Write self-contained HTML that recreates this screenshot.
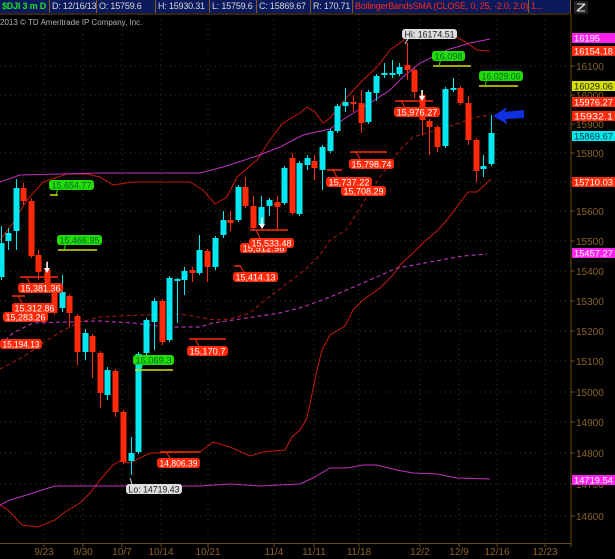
<!DOCTYPE html>
<html><head><meta charset="utf-8"><style>
html,body{margin:0;padding:0;background:#000;width:615px;height:559px;overflow:hidden;font-family:"Liberation Sans",sans-serif}
#bar{position:absolute;left:0;top:0;width:571px;height:13px;background:#0b1a5c;font-size:9px;line-height:13px;color:#d8d8d8;white-space:nowrap;letter-spacing:-0.2px}
#bar span{position:absolute;top:0;height:13px;border-right:1px solid #8a5a20;padding-left:2px;box-sizing:border-box;overflow:hidden}
svg{position:absolute;left:0;top:0}
</style></head><body>
<svg id="s" width="615" height="559" xmlns="http://www.w3.org/2000/svg" font-family="Liberation Sans, sans-serif"></svg>
<div id="bar">
<span style="left:0;width:50px;color:#22e022;font-weight:bold">$DJI 3 m D</span>
<span style="left:50px;width:47px">D: 12/16/13</span>
<span style="left:97px;width:59px">O: 15759.6</span>
<span style="left:156px;width:54px">H: 15930.31</span>
<span style="left:210px;width:47px">L: 15759.6</span>
<span style="left:257px;width:54px">C: 15869.67</span>
<span style="left:311px;width:42px">R: 170.71</span>
<span style="left:353px;width:176px;color:#ff2a1a">BollingerBandsSMA (CLOSE, 0, 25, -2.0, 2.0)</span>
<span style="left:529px;width:42px;color:#ff2a1a">1...</span>
</div>
<script>
var s=document.getElementById('s'),h='';
function L(x1,y1,x2,y2,c,w,d){h+='<line x1="'+x1+'" y1="'+y1+'" x2="'+x2+'" y2="'+y2+'" stroke="'+c+'" stroke-width="'+(w||1)+'"'+(d?' stroke-dasharray="'+d+'"':'')+'/>';}
function P(pts,c,w,d){h+='<polyline fill="none" points="'+pts+'" stroke="'+c+'" stroke-width="'+(w||1)+'"'+(d?' stroke-dasharray="'+d+'"':'')+'/>';}
function T(x,y,t,c,sz,a,tl){h+='<text x="'+x+'" y="'+y+'" fill="'+c+'" font-size="'+(sz||10)+'"'+(a?' text-anchor="'+a+'"':'')+(tl?' textLength="'+tl+'" lengthAdjust="spacingAndGlyphs"':'')+'>'+t+'</text>';}
function R(x,y,w,hh,c,r){h+='<rect x="'+x+'" y="'+y+'" width="'+w+'" height="'+hh+'" fill="'+c+'"'+(r?' rx="'+r+'"':'')+'/>';}
var dx=[44,83,122,161,208,274,314,359,420,459,497,545],dl=['9/23','9/30','10/7','10/14','10/21','11/4','11/11','11/18','12/2','12/9','12/16','12/23'];
var gy=[[66,'16100'],[95,'16000'],[124,'15900'],[153,'15800'],[182,'15700'],[211,'15600'],[241,'15500'],[271,'15400'],[301,'15300'],[331,'15200'],[361,'15100'],[392,'15000'],[422,'14900'],[453,'14800'],[484,'14700'],[516,'14600']];
dx.forEach(function(x,i){L(x,14,x,543,'#4a3410',1,'1 4');L(x,543,x,547,'#6a4a18');T(x,555,dl[i],'#8a6428',10,'middle');});
gy.forEach(function(g){L(0,g[0],571,g[0],'#4a3410',1,'1 4');L(571,g[0],575,g[0],'#6a4a18');T(576,g[0]+4,g[1],'#8a6428',10);});
L(571,14,571,547,'#6a4a18');L(0,543.5,571,543.5,'#6a4a18');L(0,14,571,14,'#6a4a18');
T(0,25,'2013 © TD Ameritrade IP Company, Inc.','#b0b0b0',8);
P('0,240 13,223 27,200 43,182 67,174 87,174 100,177 113,185 133,182 167,182 190,182 203,190 215,204 227,197 237,177 257,160 270,140 283,123 300,113 307,107 315,112 323,123 330,118 347,97 363,80 377,67 390,50 407,38 420,33 440,32 457,37 470,45 477,50 490,51','#c81a0a');
P('0,505 8,510 22,525 38,527 55,520 65,512 80,503 90,493 100,480 113,465 120,461 130,463 150,453 190,452 200,452 213,442 230,447 250,456 263,452 285,450 292,437 300,430 307,418 317,370 322,350 330,335 345,326 353,310 363,300 380,288 393,275 400,265 413,253 423,243 438,230 447,220 468,192 477,192 491,179','#c81a0a');
P('0,182 20,175 100,173 200,173 223,167 257,156 280,147 303,135 330,129 347,117 370,103 390,90 403,77 420,63 447,50 470,43 490,39','#c030c0');
P('0,505 10,500 30,494 42,490 55,486 120,486 150,486 200,486 230,484 260,486 300,484 313,478 330,468 347,468 363,465 377,465 397,470 413,473 437,474 457,478 490,479','#c030c0');
P('0,369 23,357 43,343 60,332 80,322 100,317 140,315 180,314 215,320 230,319 250,313 265,300 285,285 305,270 320,255 330,240 346,230 365,200 380,177 400,150 413,137 447,127 477,117 490,115','#b01a0a',1,'4 3');
P('0,345 13,333 33,323 67,322 100,321 133,323 167,327 200,327 213,323 247,318 280,313 303,307 330,297 363,283 397,268 430,262 463,256 487,254','#b030b0',1.2,'4 3');
var C=[[1,243,277,226,280,'c'],[8,233,241,228,250,'c'],[16,188,231,179,250,'c'],[23,188,201,183,205,'r'],[31,201,256,198,258,'r'],[38,255,272,250,280,'r'],[47,270,287,261,290,'r'],[54,288,313,283,315,'r'],[62,292,308,275,312,'c'],[69,296,313,294,327,'r'],[77,316,352,314,365,'r'],[85,333,352,329,360,'c'],[92,336,352,334,378,'r'],[100,353,393,351,408,'r'],[107,370,395,367,400,'c'],[115,371,412,369,417,'r'],[123,412,462,410,464,'r'],[131,453,461,437,475,'c'],[138,354,452,352,454,'c'],[146,320,353,318,355,'c'],[154,301,322,298,350,'c'],[162,301,342,299,345,'r'],[169,278,340,276,342,'c'],[177,279,280,278,323,'c'],[184,271,280,267,295,'c'],[192,270,273,267,282,'r'],[199,250,273,235,275,'c'],[207,251,267,249,282,'r'],[215,238,267,236,270,'c'],[223,220,235,211,238,'c'],[230,220,223,211,231,'r'],[238,187,220,185,222,'c'],[245,187,206,177,208,'r'],[253,206,228,196,230,'r'],[261,207,225,196,227,'c'],[269,200,206,198,216,'c'],[277,202,207,196,230,'r'],[284,168,203,166,205,'c'],[292,158,213,153,215,'r'],[299,163,214,161,216,'c'],[307,158,165,155,170,'c'],[314,161,168,155,180,'r'],[322,147,170,145,190,'c'],[330,131,151,129,153,'c'],[337,106,131,104,133,'c'],[345,102,106,88,112,'c'],[353,102,104,95,112,'r'],[361,103,123,90,133,'r'],[368,92,122,90,124,'c'],[376,76,93,74,101,'c'],[384,73,75,63,78,'c'],[392,73,75,60,78,'c'],[399,67,74,63,76,'c'],[407,65,70,43,80,'r'],[414,70,92,68,98,'r'],[422,95,120,90,135,'r'],[429,121,127,119,155,'r'],[437,127,147,125,152,'r'],[445,89,146,87,148,'c'],[453,88,90,78,92,'c'],[460,88,103,86,105,'r'],[468,103,140,96,145,'r'],[476,140,171,138,182,'r'],[483,166,169,155,177,'c'],[491,133,164,115,166,'c']];
C.forEach(function(c){var col=c[5]=='c'?'#00e8f0':'#ff2a0a';L(c[0]+0.5,c[3],c[0]+0.5,c[4],col);R(c[0]-2.5,c[1],6,Math.max(2,c[2]-c[1]),col);});
function B(x,y,w,t,bg,fg,lx1,ly,lx2,lc){if(lx1!=null){L(lx1,ly,lx2,ly,lc,1.5);L(lx1+6,ly,lx1+10,y,bg);}R(x,y,w,10,bg,3);T(x+w/2,y+8.5,t,fg,9.5,'middle',w-5);}
var RD='#ff2a0a',GR='#22dd00',YL='#d8e000';
B(49,180,45,'15,654.77',GR,'#063',50,195,58,YL);
B(57,235,45,'15,466.95',GR,'#063',58,250,97,YL);
B(12,303,45,'15,312.86',RD,'#fff',12,296,25,RD);
B(3,312,45,'15,283.26',RD,'#fff');
B(18,283,45,'15,381.36',RD,'#fff',20,277,58,RD);
B(0,339,42,'15,194.13',RD,'#fff');
B(133,355,41,'15,069.3',GR,'#063',135,370,173,YL);
B(157,458,43,'14,806.39',RD,'#fff',160,452,200,RD);
B(187,346,41,'15,170.7',RD,'#fff',189,339,226,RD);
B(233,272,45,'15,414.13',RD,'#fff',234,266,241,RD);
B(240,243,47,'15,512.98',RD,'#fff');
B(249,238,45,'15,533.48',RD,'#fff',250,230,288,RD);
B(341,186,45,'15,708.29',RD,'#fff');
B(326,177,46,'15,737.22',RD,'#fff',327,170,342,RD);
B(349,159,45,'15,798.74',RD,'#fff',350,152,387,RD);
B(394,107,46,'15,976.27',RD,'#fff',395,101,433,RD);
B(432,51,33,'16,098',GR,'#063',433,66,471,YL);
B(479,71,44,'16,029.06',GR,'#063',479,86,518,YL);
B(402,29,55,'Hi: 16174.51','#ddd','#222');L(408,39,405,44,'#ddd');
B(126,484,56,'Lo: 14719.43','#ddd','#222');L(132,484,130,478,'#ddd');
function DA(x,y){L(x,y-8,x,y,'#fff',1.5);h+='<polygon points="'+(x-3)+','+(y-2)+' '+(x+3)+','+(y-2)+' '+x+','+(y+3)+'" fill="#fff"/>';}
DA(47,270);DA(262,226);DA(422,98);
h+='<path d="M524,110 L505,112 L507,107 L493,116 L507,124 L506,119 L524,118 Z" fill="#1030e0"/>';
function AB(y,t,bg,fg){R(572,y,43,10,bg);T(574,y+8.5,t,fg||'#fff',9.5,null,t.length>5?39:26);}
AB(33,'16195','#ff22ee');AB(46,'16154.18',RD);AB(81,'16029.06',YL,'#222');AB(97,'15976.27',RD);AB(111,'15932.1',RD);AB(131,'15869.67','#00e8f0','#033');AB(177,'15710.03',RD);AB(248,'15457.27','#ff22ee');AB(475,'14719.54','#ff22ee');
R(574,1,14,13,'#222');L(577,11,585,4,'#ddd',1.5);L(577,4,585,4,'#ddd');L(577,11,585,11,'#ddd');
s.innerHTML=h;
</script>
</body></html>
